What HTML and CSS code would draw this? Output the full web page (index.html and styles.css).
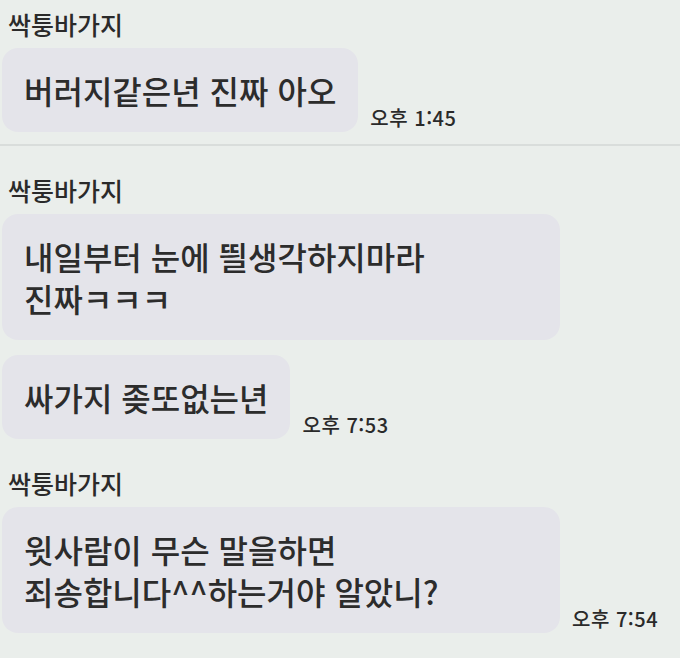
FILE: index.html
```html
<!DOCTYPE html>
<html lang="ko">

<head>
    <meta charset="UTF-8">
    <meta name="viewport" content="width=device-width, initial-scale=1.0">
    <title>채팅</title>
    <link rel="stylesheet" href="styles.css">
</head>

<body>
    <!-- First chat block -->
    <section class="chat first">
        <div class="name">싹퉁바가지</div>
        <div class="row">
            <div class="bubble">버러지같은년 진짜 아오</div>
            <span class="time">오후 1:45</span>
        </div>
    </section>

    <!-- Second chat block -->
    <section class="chat">
        <div class="name">싹퉁바가지</div>
        <div class="row">
            <div class="bubble wide">내일부터 눈에 띌생각하지마라<br>진짜ㅋㅋㅋ</div>
        </div>
        <div class="row">
            <div class="bubble">싸가지 좆또없는년</div>
            <span class="time">오후 7:53</span>
        </div>
    </section>

    <section class="chat">
        <div class="name">싹퉁바가지</div>
        <div class="row">
            <div class="bubble wide">윗사람이 무슨 말을하면<br>죄송합니다^^하는거야 알았니?</div>
            <span class="time">오후 7:54</span>
        </div>
    </section>
</body>

</html>
```

FILE: styles.css
```css
* {
    margin: 0;
    padding: 0;
    box-sizing: border-box;
}

body {
    font-family: "Noto Sans CJK KR", "Noto Sans", sans-serif;
    background-color: #eaeeeb;
    color: #333;
    width: 680px;
    height: 658px;
    overflow: hidden;
}

.chat {
    padding: 8px 0 0 2px;
}

.chat.first {
    border-bottom: 2px solid #d9dddb;
    padding-bottom: 12px;
    padding-top: 8px;
}

.chat + .chat {
    padding-top: 28px;
}

.name {
    font-size: 25px;
    font-weight: 500;
    line-height: 32px;
    padding-left: 6px;
    color: #2a2a2a;
    margin-bottom: 8px;
}

.row {
    display: flex;
    align-items: flex-end;
    gap: 12px;
    margin-bottom: 15px;
}

.row:last-child {
    margin-bottom: 0;
}

.bubble {
    background-color: #e4e4ea;
    border-radius: 16px;
    padding: 21px 22px;
    font-size: 32px;
    font-weight: 500;
    line-height: 42px;
    color: #2c2c2c;
    white-space: nowrap;
}

.bubble.wide {
    width: 558px;
    padding-top: 21px;
    padding-bottom: 21px;
}

.time {
    font-size: 20px;
    font-weight: 500;
    line-height: 22px;
    letter-spacing: 0.5px;
    margin-bottom: 3px;
    color: #2a2a2a;
    white-space: nowrap;
}
```
